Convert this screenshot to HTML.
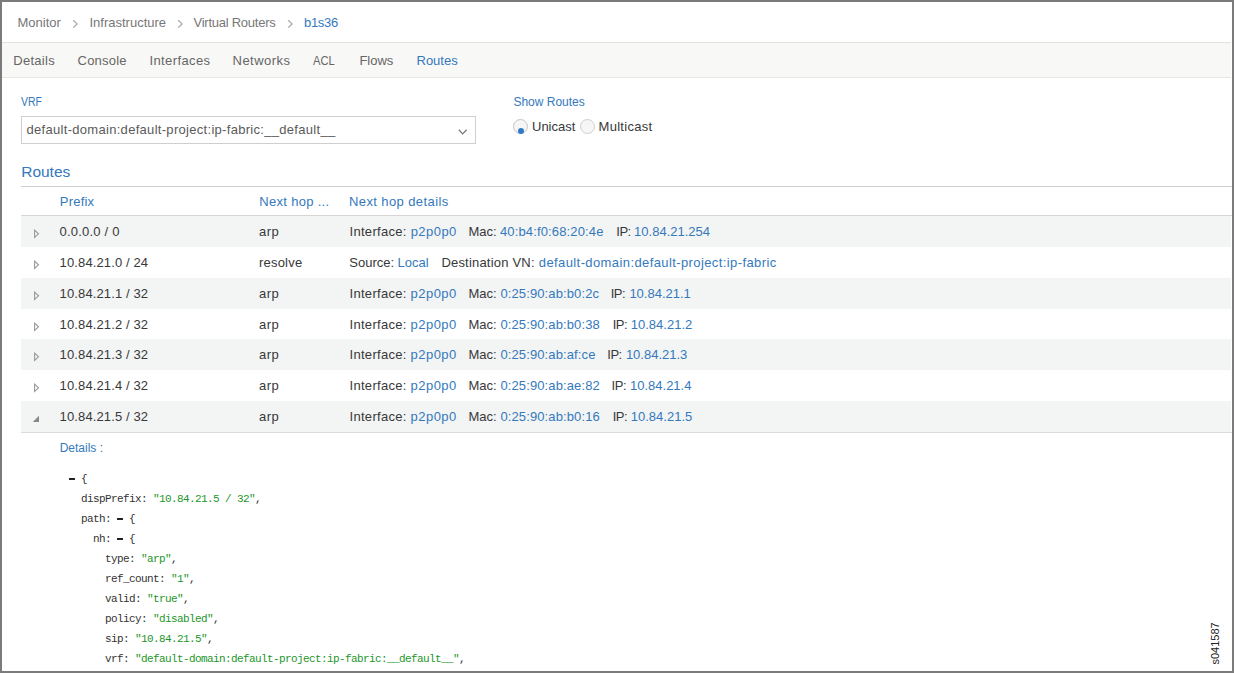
<!DOCTYPE html>
<html><head><meta charset="utf-8"><style>
html,body{margin:0;padding:0;}
body{width:1234px;height:673px;position:relative;overflow:hidden;background:#fff;font-family:"Liberation Sans",sans-serif;}
.frame{position:absolute;left:0;top:0;width:1234px;height:673px;box-sizing:border-box;border:2px solid #7b7b7b;z-index:10;pointer-events:none}
.t{position:absolute;white-space:pre;line-height:1;}
.r{position:absolute;}
.m{position:absolute;white-space:pre;font-family:"Liberation Mono",monospace;font-size:11px;letter-spacing:-0.6px;line-height:1;}
</style></head><body>
<span class="t" style="left:17.50px;top:16.00px;font-size:13px;color:#777777;">Monitor</span>
<span class="t" style="left:89.50px;top:16.00px;font-size:13px;color:#777777;">Infrastructure</span>
<span class="t" style="left:193.50px;top:16.00px;font-size:13px;color:#777777;letter-spacing:-0.25px;">Virtual Routers</span>
<span class="t" style="left:304.00px;top:16.00px;font-size:13px;color:#3479bd;letter-spacing:-0.3px;">b1s36</span>
<svg class="r" style="left:71.8px;top:18.6px" width="7" height="10" viewBox="0 0 7 10"><path d="M1.2 1.2 L5.1 4.9 L1.2 8.6" fill="none" stroke="#a4a4b0" stroke-width="1.2"/></svg>
<svg class="r" style="left:176.8px;top:18.6px" width="7" height="10" viewBox="0 0 7 10"><path d="M1.2 1.2 L5.1 4.9 L1.2 8.6" fill="none" stroke="#a4a4b0" stroke-width="1.2"/></svg>
<svg class="r" style="left:286.6px;top:18.6px" width="7" height="10" viewBox="0 0 7 10"><path d="M1.2 1.2 L5.1 4.9 L1.2 8.6" fill="none" stroke="#a4a4b0" stroke-width="1.2"/></svg>
<div class="r" style="left:2px;top:42px;width:1229px;height:1px;background:#e2e2e2;"></div>
<div class="r" style="left:2px;top:43px;width:1229px;height:34px;background:#f8f8f6;"></div>
<div class="r" style="left:2px;top:77px;width:1229px;height:1px;background:#e6e6e6;"></div>
<span class="t" style="left:13.20px;top:54.00px;font-size:13px;color:#666666;letter-spacing:0.3px;">Details</span>
<span class="t" style="left:77.60px;top:54.00px;font-size:13px;color:#666666;letter-spacing:0.2px;">Console</span>
<span class="t" style="left:149.40px;top:54.00px;font-size:13px;color:#666666;letter-spacing:0.4px;">Interfaces</span>
<span class="t" style="left:232.60px;top:54.00px;font-size:13px;color:#666666;letter-spacing:0.45px;">Networks</span>
<span class="t" style="left:313.20px;top:54.00px;font-size:13px;color:#666666;transform:scaleX(0.86);transform-origin:0 0;">ACL</span>
<span class="t" style="left:359.40px;top:54.00px;font-size:13px;color:#666666;">Flows</span>
<span class="t" style="left:416.50px;top:54.00px;font-size:13px;color:#3479bd;">Routes</span>
<span class="t" style="left:21.00px;top:95.84px;font-size:12px;color:#3479bd;transform:scaleX(0.87);transform-origin:0 0;">VRF</span>
<div class="r" style="left:21px;top:116px;width:455px;height:28px;background:#fff;box-sizing:border-box;border:1px solid #cfcfcf;"></div>
<span class="t" style="left:26.50px;top:123.00px;font-size:13px;color:#5a5a5a;letter-spacing:0.3px;">default-domain:default-project:ip-fabric:__default__</span>
<svg class="r" style="left:458.3px;top:129.4px" width="10" height="7" viewBox="0 0 10 7"><path d="M0.8 0.8 L4.7 4.9 L8.6 0.8" fill="none" stroke="#777" stroke-width="1.25"/></svg>
<span class="t" style="left:513.40px;top:95.84px;font-size:12px;color:#3479bd;">Show Routes</span>
<div class="r" style="left:513px;top:119px;width:15px;height:15px;border-radius:50%;box-sizing:border-box;border:1px solid #c4c4c4;background:#f6f6f6"></div>
<div class="r" style="left:518.1px;top:128px;width:6px;height:6px;border-radius:50%;background:#2f7ac4"></div>
<span class="t" style="left:532.00px;top:120.00px;font-size:13px;color:#383838;">Unicast</span>
<div class="r" style="left:580px;top:119px;width:15px;height:15px;border-radius:50%;box-sizing:border-box;border:1px solid #cfcfcf;background:#f6f6f6"></div>
<span class="t" style="left:598.50px;top:120.00px;font-size:13px;color:#383838;letter-spacing:0.3px;">Multicast</span>
<span class="t" style="left:21.20px;top:163.88px;font-size:15.5px;color:#3479bd;">Routes</span>
<div class="r" style="left:21px;top:186px;width:1211px;height:1px;background:#d0d0d0;"></div>
<span class="t" style="left:59.80px;top:195.00px;font-size:13px;color:#3479bd;letter-spacing:0.2px;">Prefix</span>
<span class="t" style="left:259.30px;top:195.00px;font-size:13px;color:#3479bd;letter-spacing:0.3px;">Next hop ...</span>
<span class="t" style="left:349.00px;top:195.00px;font-size:13px;color:#3479bd;letter-spacing:0.4px;">Next hop details</span>
<div class="r" style="left:21px;top:215px;width:1211px;height:1px;background:#d6d6d6;"></div>
<div class="r" style="left:21px;top:216.000px;width:1210px;height:30.857px;background:#f3f4f4"></div>
<span class="t" style="left:59.60px;top:225.00px;font-size:13px;color:#383838;letter-spacing:0.2px;">0.0.0.0 / 0</span>
<span class="t" style="left:259.00px;top:225.00px;font-size:13px;color:#383838;letter-spacing:0.5px;">arp</span>
<span class="t" style="left:349.50px;top:225.00px;font-size:13px;color:#383838;letter-spacing:0.3px;">Interface:</span>
<span class="t" style="left:410.70px;top:225.00px;font-size:13px;color:#3479bd;letter-spacing:0.45px;">p2p0p0</span>
<span class="t" style="left:468.40px;top:225.00px;font-size:13px;color:#383838;">Mac:</span>
<span class="t" style="left:500.00px;top:225.00px;font-size:13px;color:#3479bd;letter-spacing:0.14px;">40:b4:f0:68:20:4e</span>
<span class="t" style="left:616.30px;top:225.00px;font-size:13px;color:#383838;letter-spacing:-0.5px;">IP:</span>
<span class="t" style="left:634.10px;top:225.00px;font-size:13px;color:#3479bd;">10.84.21.254</span>
<svg class="r" style="left:33px;top:229.00px" width="8" height="10" viewBox="0 0 8 10"><path d="M1.6 1.2 L5.5 4.8 L1.6 8.4 Z" fill="none" stroke="#999" stroke-width="1.1"/></svg>
<span class="t" style="left:59.60px;top:255.85px;font-size:13px;color:#383838;letter-spacing:0.12px;">10.84.21.0 / 24</span>
<span class="t" style="left:259.00px;top:255.85px;font-size:13px;color:#383838;letter-spacing:0.2px;">resolve</span>
<span class="t" style="left:349.30px;top:255.85px;font-size:13px;color:#383838;letter-spacing:0.0px;">Source:</span>
<span class="t" style="left:397.60px;top:255.85px;font-size:13px;color:#3479bd;">Local</span>
<span class="t" style="left:441.40px;top:255.85px;font-size:13px;color:#383838;letter-spacing:0.2px;">Destination VN:</span>
<span class="t" style="left:538.80px;top:255.85px;font-size:13px;color:#3479bd;letter-spacing:0.4px;">default-domain:default-project:ip-fabric</span>
<svg class="r" style="left:33px;top:259.86px" width="8" height="10" viewBox="0 0 8 10"><path d="M1.6 1.2 L5.5 4.8 L1.6 8.4 Z" fill="none" stroke="#999" stroke-width="1.1"/></svg>
<div class="r" style="left:21px;top:277.714px;width:1210px;height:30.857px;background:#f3f4f4"></div>
<span class="t" style="left:59.60px;top:286.71px;font-size:13px;color:#383838;letter-spacing:0.12px;">10.84.21.1 / 32</span>
<span class="t" style="left:259.00px;top:286.71px;font-size:13px;color:#383838;letter-spacing:0.5px;">arp</span>
<span class="t" style="left:349.50px;top:286.71px;font-size:13px;color:#383838;letter-spacing:0.3px;">Interface:</span>
<span class="t" style="left:410.60px;top:286.71px;font-size:13px;color:#3479bd;letter-spacing:0.45px;">p2p0p0</span>
<span class="t" style="left:468.40px;top:286.71px;font-size:13px;color:#383838;">Mac:</span>
<span class="t" style="left:500.40px;top:286.71px;font-size:13px;color:#3479bd;letter-spacing:0.12px;">0:25:90:ab:b0:2c</span>
<span class="t" style="left:610.70px;top:286.71px;font-size:13px;color:#383838;letter-spacing:-0.5px;">IP:</span>
<span class="t" style="left:629.40px;top:286.71px;font-size:13px;color:#3479bd;">10.84.21.1</span>
<svg class="r" style="left:33px;top:290.71px" width="8" height="10" viewBox="0 0 8 10"><path d="M1.6 1.2 L5.5 4.8 L1.6 8.4 Z" fill="none" stroke="#999" stroke-width="1.1"/></svg>
<span class="t" style="left:59.60px;top:317.57px;font-size:13px;color:#383838;letter-spacing:0.12px;">10.84.21.2 / 32</span>
<span class="t" style="left:259.00px;top:317.57px;font-size:13px;color:#383838;letter-spacing:0.5px;">arp</span>
<span class="t" style="left:349.50px;top:317.57px;font-size:13px;color:#383838;letter-spacing:0.3px;">Interface:</span>
<span class="t" style="left:410.60px;top:317.57px;font-size:13px;color:#3479bd;letter-spacing:0.45px;">p2p0p0</span>
<span class="t" style="left:468.40px;top:317.57px;font-size:13px;color:#383838;">Mac:</span>
<span class="t" style="left:500.40px;top:317.57px;font-size:13px;color:#3479bd;letter-spacing:0.12px;">0:25:90:ab:b0:38</span>
<span class="t" style="left:612.70px;top:317.57px;font-size:13px;color:#383838;letter-spacing:-0.5px;">IP:</span>
<span class="t" style="left:630.80px;top:317.57px;font-size:13px;color:#3479bd;">10.84.21.2</span>
<svg class="r" style="left:33px;top:321.57px" width="8" height="10" viewBox="0 0 8 10"><path d="M1.6 1.2 L5.5 4.8 L1.6 8.4 Z" fill="none" stroke="#999" stroke-width="1.1"/></svg>
<div class="r" style="left:21px;top:339.429px;width:1210px;height:30.857px;background:#f3f4f4"></div>
<span class="t" style="left:59.60px;top:348.42px;font-size:13px;color:#383838;letter-spacing:0.12px;">10.84.21.3 / 32</span>
<span class="t" style="left:259.00px;top:348.42px;font-size:13px;color:#383838;letter-spacing:0.5px;">arp</span>
<span class="t" style="left:349.50px;top:348.42px;font-size:13px;color:#383838;letter-spacing:0.3px;">Interface:</span>
<span class="t" style="left:410.60px;top:348.42px;font-size:13px;color:#3479bd;letter-spacing:0.45px;">p2p0p0</span>
<span class="t" style="left:468.40px;top:348.42px;font-size:13px;color:#383838;">Mac:</span>
<span class="t" style="left:500.40px;top:348.42px;font-size:13px;color:#3479bd;letter-spacing:0.12px;">0:25:90:ab:af:ce</span>
<span class="t" style="left:607.30px;top:348.42px;font-size:13px;color:#383838;letter-spacing:-0.5px;">IP:</span>
<span class="t" style="left:625.90px;top:348.42px;font-size:13px;color:#3479bd;">10.84.21.3</span>
<svg class="r" style="left:33px;top:352.43px" width="8" height="10" viewBox="0 0 8 10"><path d="M1.6 1.2 L5.5 4.8 L1.6 8.4 Z" fill="none" stroke="#999" stroke-width="1.1"/></svg>
<span class="t" style="left:59.60px;top:379.28px;font-size:13px;color:#383838;letter-spacing:0.12px;">10.84.21.4 / 32</span>
<span class="t" style="left:259.00px;top:379.28px;font-size:13px;color:#383838;letter-spacing:0.5px;">arp</span>
<span class="t" style="left:349.50px;top:379.28px;font-size:13px;color:#383838;letter-spacing:0.3px;">Interface:</span>
<span class="t" style="left:410.60px;top:379.28px;font-size:13px;color:#3479bd;letter-spacing:0.45px;">p2p0p0</span>
<span class="t" style="left:468.40px;top:379.28px;font-size:13px;color:#383838;">Mac:</span>
<span class="t" style="left:500.40px;top:379.28px;font-size:13px;color:#3479bd;letter-spacing:0.12px;">0:25:90:ab:ae:82</span>
<span class="t" style="left:611.60px;top:379.28px;font-size:13px;color:#383838;letter-spacing:-0.5px;">IP:</span>
<span class="t" style="left:630.00px;top:379.28px;font-size:13px;color:#3479bd;">10.84.21.4</span>
<svg class="r" style="left:33px;top:383.29px" width="8" height="10" viewBox="0 0 8 10"><path d="M1.6 1.2 L5.5 4.8 L1.6 8.4 Z" fill="none" stroke="#999" stroke-width="1.1"/></svg>
<div class="r" style="left:21px;top:401.143px;width:1210px;height:30.857px;background:#f3f4f4"></div>
<span class="t" style="left:59.60px;top:410.14px;font-size:13px;color:#383838;letter-spacing:0.12px;">10.84.21.5 / 32</span>
<span class="t" style="left:259.00px;top:410.14px;font-size:13px;color:#383838;letter-spacing:0.5px;">arp</span>
<span class="t" style="left:349.50px;top:410.14px;font-size:13px;color:#383838;letter-spacing:0.3px;">Interface:</span>
<span class="t" style="left:410.60px;top:410.14px;font-size:13px;color:#3479bd;letter-spacing:0.45px;">p2p0p0</span>
<span class="t" style="left:468.40px;top:410.14px;font-size:13px;color:#383838;">Mac:</span>
<span class="t" style="left:500.40px;top:410.14px;font-size:13px;color:#3479bd;letter-spacing:0.12px;">0:25:90:ab:b0:16</span>
<span class="t" style="left:612.70px;top:410.14px;font-size:13px;color:#383838;letter-spacing:-0.5px;">IP:</span>
<span class="t" style="left:630.80px;top:410.14px;font-size:13px;color:#3479bd;">10.84.21.5</span>
<svg class="r" style="left:32px;top:415.14px" width="8" height="8" viewBox="0 0 8 8"><path d="M7 0.8 L7 7 L0.8 7 Z" fill="#888"/></svg>
<div class="r" style="left:21px;top:432px;width:1211px;height:1px;background:#dcdcdc;"></div>
<span class="t" style="left:59.70px;top:441.54px;font-size:12px;color:#3479bd;">Details :</span>
<div class="r" style="left:69.20px;top:477.60px;width:6.3px;height:2.5px;background:#222"></div>
<span class="m" style="left:69px;top:473.57px"> <span style="color:#333"> {</span></span>
<span class="m" style="left:81px;top:493.57px"><span style="color:#333">dispPrefix: </span><span style="color:#22962a">"10.84.21.5 / 32"</span><span style="color:#333">,</span></span>
<div class="r" style="left:117.20px;top:517.60px;width:6.3px;height:2.5px;background:#222"></div>
<span class="m" style="left:81px;top:513.57px"><span style="color:#333">path: </span> <span style="color:#333"> {</span></span>
<div class="r" style="left:117.20px;top:537.60px;width:6.3px;height:2.5px;background:#222"></div>
<span class="m" style="left:93px;top:533.57px"><span style="color:#333">nh: </span> <span style="color:#333"> {</span></span>
<span class="m" style="left:105px;top:553.57px"><span style="color:#333">type: </span><span style="color:#22962a">"arp"</span><span style="color:#333">,</span></span>
<span class="m" style="left:105px;top:573.57px"><span style="color:#333">ref_count: </span><span style="color:#22962a">"1"</span><span style="color:#333">,</span></span>
<span class="m" style="left:105px;top:593.57px"><span style="color:#333">valid: </span><span style="color:#22962a">"true"</span><span style="color:#333">,</span></span>
<span class="m" style="left:105px;top:613.57px"><span style="color:#333">policy: </span><span style="color:#22962a">"disabled"</span><span style="color:#333">,</span></span>
<span class="m" style="left:105px;top:633.57px"><span style="color:#333">sip: </span><span style="color:#22962a">"10.84.21.5"</span><span style="color:#333">,</span></span>
<span class="m" style="left:105px;top:653.57px"><span style="color:#333">vrf: </span><span style="color:#22962a">"default-domain:default-project:ip-fabric:__default__"</span><span style="color:#333">,</span></span>
<span class="t" style="left:1195.3px;top:638.8px;font-size:11px;color:#222;transform:rotate(-90deg);transform-origin:center;width:40px;text-align:center">s041587</span>
<div class="frame"></div>
</body></html>
